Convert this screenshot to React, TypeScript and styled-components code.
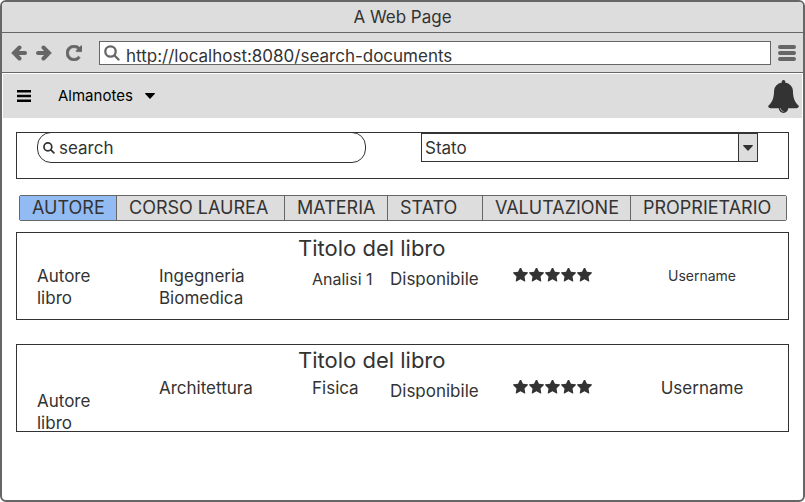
import React from "react";
import styled, { createGlobalStyle } from "styled-components";

const ink = "#333333";
const chrome = "#666666";
const panel = "#dddddd";

const GlobalStyle = createGlobalStyle`
  * { box-sizing: border-box; }
  html, body { margin: 0; background: #fff; }
  body { font-family: Inter, "Open Sans", sans-serif; font-size: 17px; line-height: 22px; color: ${ink}; }
  button, input, select { font: inherit; color: inherit; margin: 0; padding: 0; border: 0; background: none; }
  svg { display: block; flex: none; }
  h1, h2, p { margin: 0; font-weight: 400; }
`;

const Frame = styled.div`
  min-height: 100vh;
  border: 2px solid ${chrome};
  border-radius: 6px;
  overflow: hidden;
`;
const TitleBar = styled.div`
  height: 31px;
  display: flex;
  align-items: center;
  justify-content: center;
  background: ${panel};
  border-bottom: 1px solid ${chrome};
`;
const WindowTitle = styled.h1`
  font-size: 17px;
`;
const AddressBar = styled.div`
  height: 40px;
  display: flex;
  align-items: center;
  gap: 7px;
  padding: 0 7px 0 8px;
  background: ${panel};
  border-bottom: 1px solid ${chrome};
  color: ${chrome};
`;
const IconButton = styled.button`
  display: flex;
  align-items: center;
  justify-content: center;
  color: inherit;
`;
const ReloadButton = styled(IconButton)`
  margin: 0 10px 0 6px;
`;
const Address = styled.label`
  flex: 1;
  height: 24px;
  display: flex;
  align-items: center;
  gap: 6px;
  padding-left: 4px;
  background: #fff;
  border: 1px solid ${chrome};
  input { flex: 1; min-width: 0; height: 22px; padding-top: 6px; color: ${ink}; line-height: 16px; }
`;
const AppBar = styled.header`
  height: 44px;
  margin: 1px 1px 0;
  display: flex;
  align-items: center;
  gap: 27px;
  padding: 0 3px 0 14px;
  background: ${panel};
  color: #000;
`;
const MenuButton = styled.button`
  display: flex;
  align-items: center;
  gap: 12px;
  font-size: 15px;
`;
const Bell = styled(IconButton)`
  margin-left: auto;
  color: ${ink};
`;
const Main = styled.main`
  padding: 14px;
`;
const Filters = styled.form`
  height: 47px;
  display: grid;
  grid-template-columns: 329fr 337fr;
  column-gap: 55px;
  align-items: start;
  padding: 0 30px 0 20px;
  border: 1px solid ${ink};
`;
const SearchBox = styled.label`
  height: 31px;
  margin-top: -1px;
  display: flex;
  align-items: center;
  gap: 4px;
  padding-left: 5px;
  border: 1px solid ${ink};
  border-radius: 14px;
  input { flex: 1; min-width: 0; }
  input::placeholder { color: ${ink}; opacity: 1; }
`;
const SelectBox = styled.div`
  height: 29px;
  display: grid;
  grid-template-columns: 1fr 19px;
  border: 1px solid ${ink};
  select { grid-area: 1 / 1 / 2 / 3; appearance: none; padding-left: 3px; }
`;
const SelectArrow = styled.span`
  grid-area: 1 / 2;
  display: flex;
  align-items: center;
  justify-content: center;
  background: ${panel};
  border-left: 1px solid ${ink};
  pointer-events: none;
`;
const Tabs = styled.nav`
  display: grid;
  grid-template-columns: 96fr 168fr 103fr 95fr 148fr 156fr;
  margin: 16px 2px 11px 3px;
  border: 1px solid ${chrome};
  border-radius: 2px;
`;
const Tab = styled.button<{ $active?: boolean }>`
  height: 24px;
  padding-left: 12px;
  text-align: left;
  white-space: nowrap;
  font-size: 18px;
  background: ${(p) => (p.$active ? "#93bbf3" : panel)};
  & + & { border-left: 1px solid ${chrome}; }
`;
const Card = styled.article`
  height: 88px;
  display: grid;
  grid-template-columns: 122fr 139fr 92fr 123fr 120fr 138fr;
  grid-template-rows: 30px 1fr;
  padding: 0 17px 0 20px;
  border: 1px solid ${ink};
  & + & { margin-top: 24px; }
`;
const CardTitle = styled.h2`
  grid-column: 3 / -1;
  font-size: 22px;
  line-height: 30px;
`;
type Drop = "none" | "small" | "large";
const drops: Record<Drop, number> = { none: 2, small: 5, large: 15 };
const Cell = styled.p<{ $drop?: Drop; $size?: number; $center?: boolean; $indent?: boolean }>`
  padding-top: ${(p) => drops[p.$drop ?? "none"]}px;
  padding-left: ${(p) => (p.$indent ? 14 : 0)}px;
  font-size: ${(p) => p.$size ?? 17}px;
  text-align: ${(p) => (p.$center ? "center" : "left")};
`;
const Wrapped = styled.span`
  display: block;
  max-width: 100px;
`;
const Clipped = styled.span`
  display: block;
  height: 19px;
  overflow: hidden;
`;
const Rating = styled.div`
  display: flex;
  gap: 1px;
  padding-top: 5px;
`;

const Arrow = ({ right }: { right?: boolean }) => (
  <svg width="18" height="16" viewBox="0 0 18 16" fill="none" stroke="currentColor" strokeWidth="4" strokeLinecap="round">
    {right ? <path d="M3 8h11M8.500 2.500 14 8l-5.500 5.500" /> : <path d="M15 8H4M9.500 2.500 4 8l5.500 5.500" />}
  </svg>
);
const Reload = () => (
  <svg width="16" height="16" viewBox="128 128 1536 1536" fill="currentColor" stroke="currentColor" strokeWidth="50">
    <path d="M1664 256v448q0 26-19 45t-45 19h-448q-42 0-59-40-17-39 14-69l138-138q-148-137-349-137-104 0-198.500 40.500t-163.500 109.500-109.500 163.500-40.500 198.500 40.500 198.500 109.500 163.500 163.500 109.500 198.500 40.500q119 0 225-52t179-147q7-10 23-12 15 0 25 9l137 138q9 8 9.500 20.500t-7.500 22.500q-109 132-264 204.500t-327 72.500q-156 0-298-61t-245-164-164-245-61-298 61-298 164-245 245-164 298-61q147 0 284.500 55.500t244.500 156.500l130-129q29-31 70-14 39 17 39 59z" />
  </svg>
);
const Lens = ({ size }: { size: number }) => (
  <svg width={size} height={size} viewBox="0 0 16 16" fill="none" stroke="currentColor" strokeWidth="2.300" strokeLinecap="round">
    <circle cx="6.500" cy="6.500" r="5.200" />
    <path d="M10.500 10.500 14.500 14.500" />
  </svg>
);
const Bars = () => (
  <svg width="18" height="16" viewBox="0 0 18 16" stroke="currentColor" strokeWidth="4" strokeLinecap="round">
    <path d="M2 2h14M2 8h14M2 14h14" />
  </svg>
);
const Menu = () => (
  <svg width="14" height="12" viewBox="0 0 14 12" fill="currentColor">
    <path d="M0 0h14v2.500H0zM0 4.800h14v2.500H0zM0 9.500h14v2.500H0z" />
  </svg>
);
const Caret = () => (
  <svg width="10" height="6" viewBox="0 0 10 6" fill="currentColor">
    <path d="M.500 0h9q.800.300.200 1L5.500 5.500q-.500.400-1 0L.300 1Q-.200.300.500 0z" />
  </svg>
);
const BellIcon = () => (
  <svg width="31" height="33" viewBox="64 0 1664 1792" fill="currentColor">
    <path d="M912 1696q0-16-16-16-59 0-101.500-42.500t-42.500-101.500q0-16-16-16t-16 16q0 73 51.500 124.500t124.500 51.500q16 0 16-16zm816-288q0 52-38 90t-90 38h-448q0 106-75 181t-181 75-181-75-75-181h-448q-52 0-90-38t-38-90q50-42 91-88t85-119.500 74.500-158.500 50-206 19.500-260q0-152 117-282.500t307-158.500q-8-19-8-39 0-40 28-68t68-28 68 28 28 68q0 20-8 39 190 28 307 158.500t117 282.500q0 139 19.500 260t50 206 74.500 158.500 85 119.500 91 88z" />
  </svg>
);
const Star = () => (
  <svg width="15" height="14" viewBox="0 128 1664 1536" fill="currentColor">
    <path d="M1664 647q0 22-26 48l-363 354 86 500q1 7 1 20 0 21-10.500 35.500t-30.500 14.500q-19 0-40-12l-449-236-449 236q-22 12-40 12-21 0-31.500-14.500t-10.500-35.500q0-6 2-20l86-500-364-354q-25-27-25-48 0-37 56-46l502-73 225-455q19-41 49-41t49 41l225 455 502 73q56 9 56 46z" />
  </svg>
);

const columns = ["AUTORE", "CORSO LAUREA", "MATERIA", "STATO", "VALUTAZIONE", "PROPRIETARIO"];

type Book = {
  course: string;
  subject: string;
  authorDrop: Drop;
  subjectDrop: Drop;
  subjectSize: number;
  ownerSize: number;
};
const books: Book[] = [
  { course: "Ingegneria Biomedica", subject: "Analisi 1", authorDrop: "none", subjectDrop: "small", subjectSize: 16, ownerSize: 14 },
  { course: "Architettura", subject: "Fisica", authorDrop: "large", subjectDrop: "none", subjectSize: 17, ownerSize: 17 },
];

export default function App() {
  return (
    <>
      <GlobalStyle />
      <Frame>
        <TitleBar>
          <WindowTitle>A Web Page</WindowTitle>
        </TitleBar>
        <AddressBar>
          <IconButton aria-label="Back"><Arrow /></IconButton>
          <IconButton aria-label="Forward"><Arrow right /></IconButton>
          <ReloadButton aria-label="Reload"><Reload /></ReloadButton>
          <Address>
            <Lens size={16} />
            <input aria-label="Address" defaultValue="http://localhost:8080/search-documents" />
          </Address>
          <IconButton aria-label="Browser menu"><Bars /></IconButton>
        </AddressBar>
        <AppBar>
          <IconButton aria-label="Menu"><Menu /></IconButton>
          <MenuButton>Almanotes<Caret /></MenuButton>
          <Bell aria-label="Notifications"><BellIcon /></Bell>
        </AppBar>
        <Main>
          <Filters>
            <SearchBox>
              <Lens size={12} />
              <input aria-label="Search" placeholder="search" />
            </SearchBox>
            <SelectBox>
              <select aria-label="Stato"><option>Stato</option></select>
              <SelectArrow><Caret /></SelectArrow>
            </SelectBox>
          </Filters>
          <Tabs>
            {columns.map((c, i) => <Tab key={c} $active={i === 0}>{c}</Tab>)}
          </Tabs>
          {books.map((b) => (
            <Card key={b.course}>
              <CardTitle>Titolo del libro</CardTitle>
              <Cell $drop={b.authorDrop}>Autore<br />libro</Cell>
              <Cell><Wrapped>{b.course}</Wrapped></Cell>
              <Cell $drop={b.subjectDrop} $size={b.subjectSize} $indent>{b.subject}</Cell>
              <Cell $drop="small"><Clipped>Disponibile</Clipped></Cell>
              <Rating role="img" aria-label="5 su 5">{[1, 2, 3, 4, 5].map((n) => <Star key={n} />)}</Rating>
              <Cell $size={b.ownerSize} $center>Username</Cell>
            </Card>
          ))}
        </Main>
      </Frame>
    </>
  );
}
